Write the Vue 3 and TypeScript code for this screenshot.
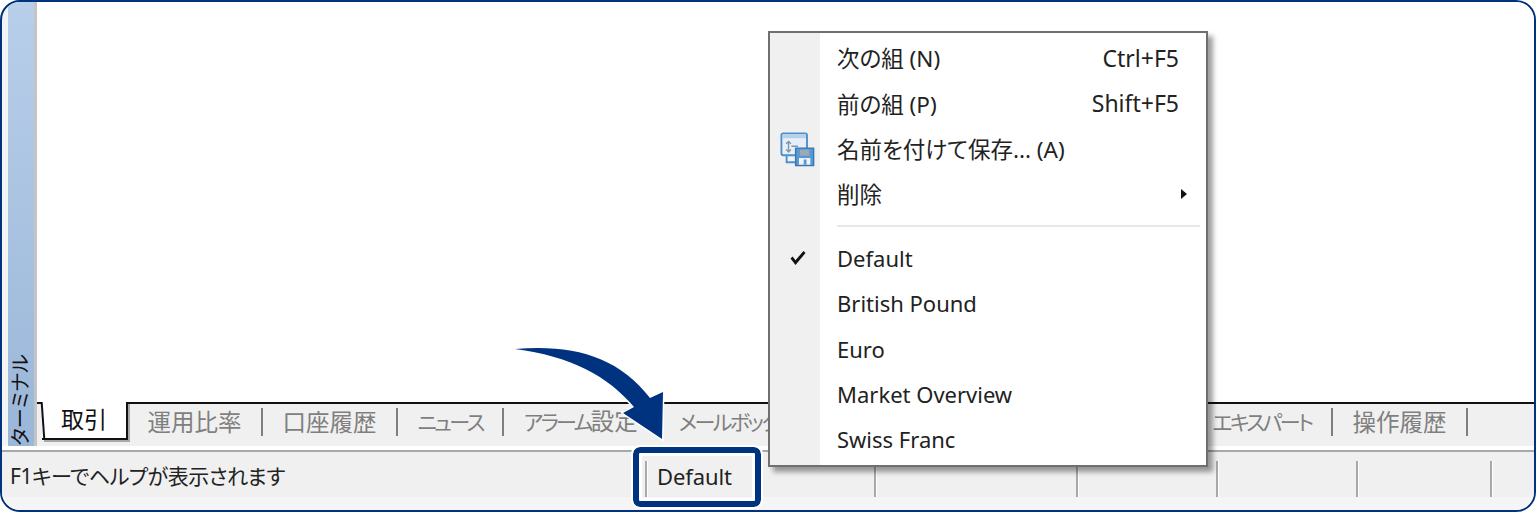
<script setup lang="ts">
interface Seg { text: string; kana: boolean }
function segs(text: string): Seg[] {
  const parts = text.match(/[\u30a0-\u30ff]+|[^\u30a0-\u30ff]+/g) ?? [];
  return parts.map((p) => ({ text: p, kana: /[\u30a0-\u30ff]/.test(p) }));
}
const leftTabs: string[] = ['運用比率', '口座履歴', 'ニュース', 'アラーム設定', 'メールボックス'];
const rightTabs: string[] = ['エキスパート', '操作履歴'];
const statusCells: string[] = ['Default', '', '', '', '', ''];
interface Item { label: string; key?: string; icon?: boolean; sub?: boolean; check?: boolean; sep?: boolean; cjk?: boolean }
const items: Item[] = [
  { label: '次の組 (N)', key: 'Ctrl+F5', cjk: true },
  { label: '前の組 (P)', key: 'Shift+F5', cjk: true },
  { label: '名前を付けて保存... (A)', icon: true, cjk: true },
  { label: '削除', sub: true, cjk: true },
  { label: '', sep: true },
  { label: 'Default', check: true },
  { label: 'British Pound' },
  { label: 'Euro' },
  { label: 'Market Overview' },
  { label: 'Swiss Franc' },
];
</script>

<template>
  <div class="frame">
    <div class="upper">
      <div class="side">
        <span class="side-label">ターミナル</span>
      </div>
      <div class="workspace">
        <div class="canvas"></div>
        <div class="tabs">
          <div class="tab-group">
            <div class="tab-active">取引</div>
            <template v-for="t in leftTabs" :key="t">
              <span class="tab"><span v-for="s in segs(t)" :key="s.text" :class="{ kana: s.kana }">{{ s.text }}</span></span>
              <span class="tab-sep"></span>
            </template>
          </div>
          <div class="tab-group right">
            <template v-for="t in rightTabs" :key="t">
              <span class="tab"><span v-for="s in segs(t)" :key="s.text" :class="{ kana: s.kana }">{{ s.text }}</span></span>
              <span class="tab-sep"></span>
            </template>
          </div>
        </div>
      </div>
    </div>
    <div class="rule"></div>
    <div class="status">
      <div class="status-help">F1キーでヘルプが表示されます</div>
      <div v-for="(c, i) in statusCells" :key="i" class="status-cell">{{ c }}</div>
    </div>
    <div class="foot"></div>

    <div class="menu">
      <template v-for="it in items" :key="it.label">
        <div v-if="it.sep" class="menu-sep"><i></i></div>
        <div v-else class="menu-row" :class="{ cjk: it.cjk }">
          <span class="gutter">
            <svg v-if="it.icon" class="icon" width="36" height="36" viewBox="0 0 38 38" fill="none">
              <rect x="1.500" y="1.500" width="27" height="23" rx="2" fill="#e6eef7" stroke="#4f8fca" stroke-width="2"/>
              <rect x="2.500" y="2.500" width="25" height="4" fill="#b5d0ea"/>
              <path d="M9 10v11M6.500 12.500 9 10l2.500 2.500M6.500 18.500 9 21l2.500-2.500M12 15h7" stroke="#7c98b0" stroke-width="1.500"/>
              <path d="M7 25v7h11" fill="#eef4fa" stroke="#4f8fca" stroke-width="2"/>
              <path d="M16.500 17h19v18.500h-19z" fill="#5a98d2" stroke="#3a76ae" stroke-width="1.500" stroke-linejoin="round"/>
              <rect x="21" y="18.500" width="10" height="6.500" fill="#9aa9b6"/>
              <rect x="20" y="27.500" width="12" height="7" fill="#eef4fa"/>
              <rect x="25" y="29" width="3" height="5.500" fill="#5a98d2"/>
            </svg>
            <svg v-if="it.check" class="check" width="16" height="16" viewBox="0 0 16 16">
              <path d="M0.500 8.500 5.500 15 15.500 3 13.500 1 5.500 10.200 2.600 6.400z" fill="#111"/>
            </svg>
          </span>
          <span class="label">{{ it.label }}</span>
          <span v-if="it.key" class="shortcut">{{ it.key }}</span>
          <span v-if="it.sub" class="submark"></span>
        </div>
      </template>
    </div>

    <div class="callout"></div>
    <svg class="arrow" width="200" height="120" viewBox="500 335 200 120">
      <path d="M515 349C572 344 618 356 650 398L663 392 662 439 623 413 634 407C608 376 570 356 515 349Z"
        fill="#00337f" stroke="#fff" stroke-width="3" paint-order="stroke" stroke-linejoin="miter"/>
    </svg>
  </div>
</template>

<style>
html, body { margin: 0; background: #fff; }
</style>

<style scoped>
.frame {
  position: relative;
  width: 1536px;
  height: 512px;
  box-sizing: border-box;
  border: 2px solid #00337f;
  border-radius: 20px;
  overflow: hidden;
  background: #f4f4f4;
  display: flex;
  flex-direction: column;
  font-family: "Noto Sans", "Noto Sans CJK JP", sans-serif;
  font-feature-settings: "palt";
  color: #222;
}
.upper { display: flex; height: 444px; padding-left: 6px; }
.side {
  width: 26px;
  background: linear-gradient(#b8cfea, #9ab6d8);
  border-right: 3px solid #c4c4c4;
  display: flex;
  align-items: flex-end;
  justify-content: center;
}
.side-label {
  writing-mode: vertical-rl;
  text-orientation: sideways;
  transform: rotate(180deg);
  font-size: 20px;
  line-height: 26px;
  color: #111;
  margin-bottom: 1px;
  white-space: nowrap;
}
.workspace { flex: 1; display: flex; flex-direction: column; min-width: 0; }
.canvas { flex: 1; background: #fff; }
.tabs {
  height: 42px;
  border-top: 2px solid #111;
  background: #f0f0f0;
  display: flex;
  justify-content: space-between;
}
.tab-group { display: flex; align-items: center; gap: 19.500px; height: 35px; }
.tab-group.right { padding-right: 66px; }
.tab-active {
  position: relative;
  width: 84px;
  height: 36px;
  margin: -2px 0 0 5px;
  flex: none;
  align-self: flex-start;
  background: #fff;
  border-right: 2px solid #111;
  border-bottom: 2px solid #111;
  box-shadow: 2px 2px 0 #a8a8a8;
  text-align: center;
  font-size: 23px;
  line-height: 34px;
  color: #111;
}
.tab-active::before {
  content: "";
  position: absolute;
  left: 0;
  top: 0;
  bottom: -2px;
  border-left: 2px solid #111;
  transform: skewX(4deg);
}
.tab { font-size: 23.500px; line-height: 30px; color: #7f7f7f; white-space: nowrap; }
.kana { font-size: 21px; letter-spacing: -2.600px; }
.tab-sep { width: 2px; height: 28px; background: #7f7f7f; flex: none; }
.rule {
  height: 6px;
  box-sizing: border-box;
  background: #fff;
  border-bottom: 2px solid #a8a8a8;
}
.status {
  height: 45px;
  background: #f0f0f0;
  display: grid;
  grid-template-columns: 643px 229px 202px 140px 140px 134px 1fr;
  align-items: end;
  position: relative;
}
.status-help {
  align-self: center;
  padding: 2px 0 0 8px;
  font-size: 21px;
  letter-spacing: -.500px;
  line-height: 30px;
  white-space: nowrap;
}
.status-cell {
  height: 36px;
  box-sizing: border-box;
  border-left: 2px solid #a8a8a8;
  padding-left: 10px;
  font-size: 22px;
  letter-spacing: -.100px;
  line-height: 31px;
  box-shadow: inset 1px 0 0 #fff;
}
.foot { flex: 1; background: #f5f5f5; }
.menu {
  position: absolute;
  left: 766px;
  top: 29px;
  width: 440px;
  height: 436px;
  box-sizing: border-box;
  border: 2px solid #6f6f6f;
  background: linear-gradient(90deg, #f0f0f0 50px, #fff 50px);
  padding-top: 2px;
  box-shadow: 5px 5px 5px rgba(0, 0, 0, .38);
}
.menu-row {
  position: relative;
  height: 45.400px;
  display: flex;
  align-items: center;
  font-size: 22px;
  white-space: nowrap;
}
.menu-row.cjk { font-size: 22.500px; }
.gutter {
  width: 50px;
  flex: none;
  display: flex;
  align-items: center;
  justify-content: center;
  margin-right: 17px;
}
.icon { margin: 3px 0 0 5px; }
.check { margin-left: 6px; }
.label { flex: 1; }
.shortcut { margin-right: 27px; font-size: 23px; }
.submark {
  width: 0;
  height: 0;
  margin-right: 19px;
  border-left: 6px solid #111;
  border-top: 5px solid transparent;
  border-bottom: 5px solid transparent;
}
.menu-sep { height: 18.600px; display: flex; align-items: center; padding: 0 6px 0 67px; }
.menu-sep i { flex: 1; height: 2px; background: #e8e8e8; }
.callout {
  position: absolute;
  left: 631px;
  top: 445px;
  width: 128px;
  height: 60px;
  box-sizing: border-box;
  border: 6px solid #00337f;
  border-radius: 7px;
  outline: 2px solid #fff;
  box-shadow: inset 0 0 0 3px #fff;
}
.arrow { position: absolute; left: 498px; top: 333px; pointer-events: none; }
</style>
